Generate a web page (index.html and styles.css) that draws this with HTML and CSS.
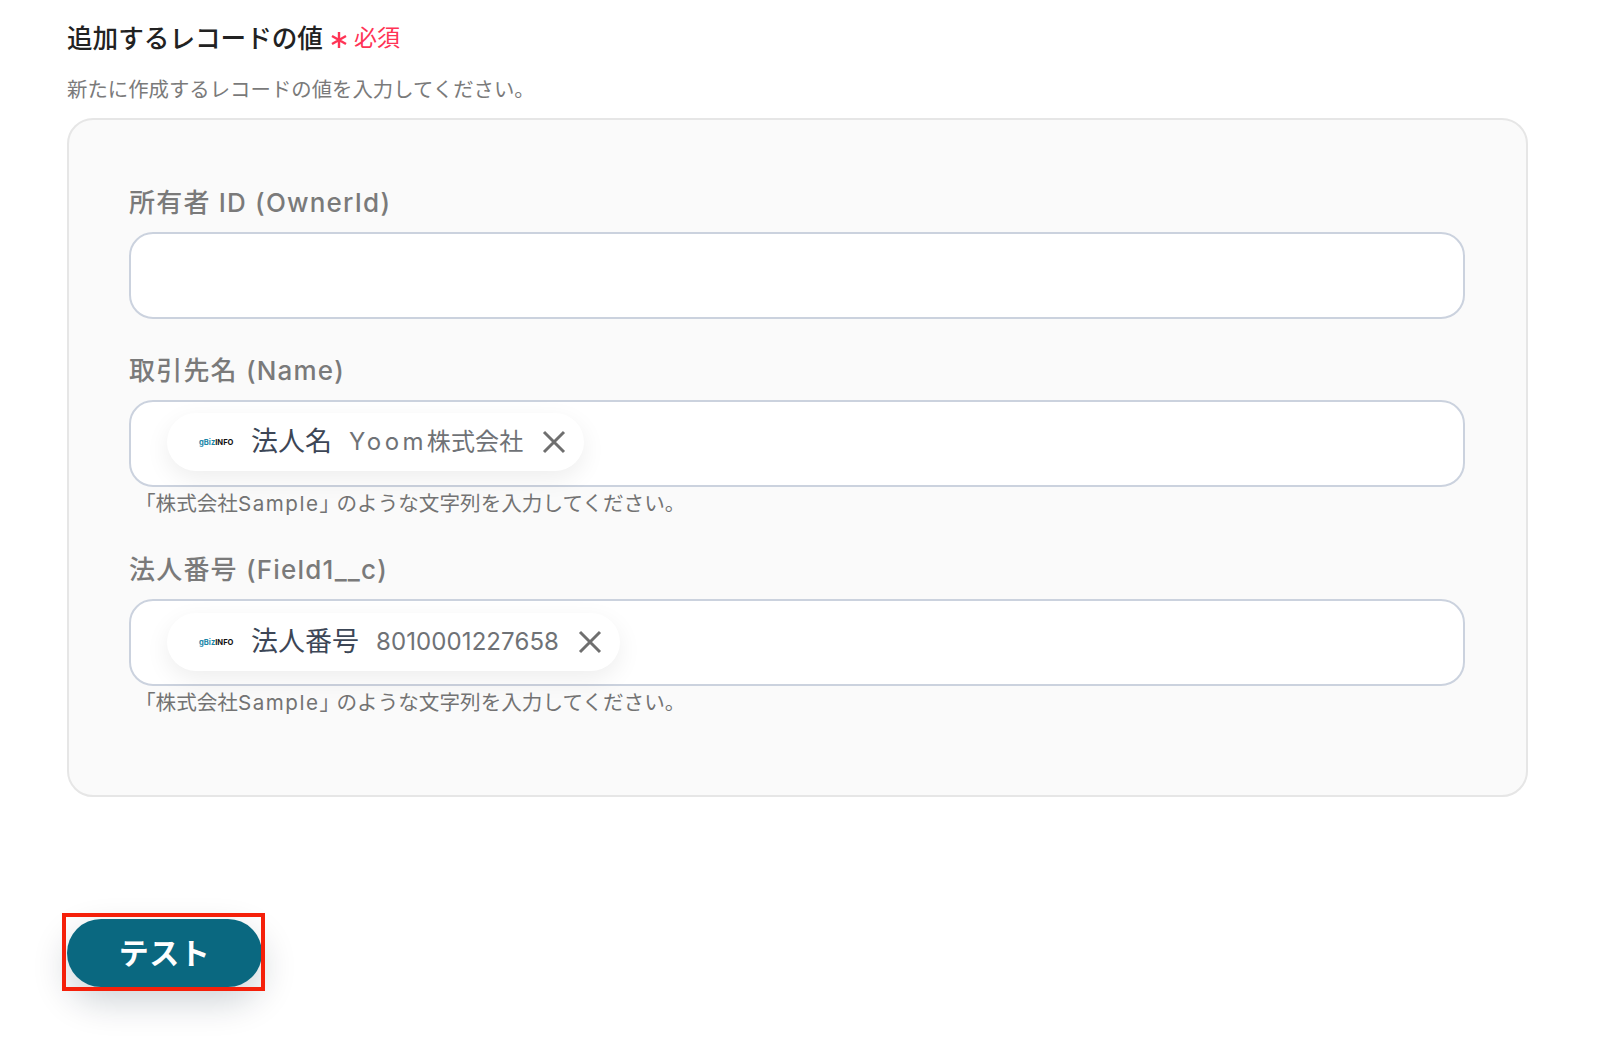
FILE: index.html
```html
<!DOCTYPE html>
<html lang="ja">
<head>
    <meta charset="UTF-8">
    <title>追加するレコードの値</title>
    <link rel="stylesheet" href="styles.css">
</head>
<body>
    <div class="page">
        <div class="heading">
            <h2>追加するレコードの値</h2>
            <svg class="asterisk" viewBox="0 0 16 16"><path d="M8 0V16M1 4L15 12M15 4L1 12"/></svg>
            <span class="required">必須</span>
        </div>
        <p class="lead">新たに作成するレコードの値を入力してください。</p>

        <div class="panel">
            <div class="field field-first">
                <label>所有者 ID (OwnerId)</label>
                <div class="input"></div>
            </div>

            <div class="field">
                <label>取引先名 (Name)</label>
                <div class="input">
                    <div class="chip">
                        <span class="logo"><span class="logo-biz">gBiz</span>INFO</span>
                        <span class="chip-name">法人名</span>
                        <span class="chip-value"><span class="tracked">Yoom</span>株式会社</span>
                        <svg class="chip-close" viewBox="0 0 24 24"><path d="M2 2L22 22M22 2L2 22"/></svg>
                    </div>
                </div>
                <p class="hint">「株式会社<span class="sample">Sample」</span>のような文字列を入力してください。</p>
            </div>

            <div class="field">
                <label>法人番号 (Field1__c)</label>
                <div class="input">
                    <div class="chip chip-number">
                        <span class="logo"><span class="logo-biz">gBiz</span>INFO</span>
                        <span class="chip-name">法人番号</span>
                        <span class="chip-value">8010001227658</span>
                        <svg class="chip-close" viewBox="0 0 24 24"><path d="M2 2L22 22M22 2L2 22"/></svg>
                    </div>
                </div>
                <p class="hint">「株式会社<span class="sample">Sample」</span>のような文字列を入力してください。</p>
            </div>
        </div>

        <div class="actions">
            <button type="button">テスト</button>
            <div class="highlight"></div>
        </div>
    </div>
</body>
</html>
```

FILE: styles.css
```css
* {
    box-sizing: border-box;
}
body {
    margin: 0;
    background: #fff;
    font-family: Inter, "Noto Sans CJK JP", sans-serif;
    color: #6f6f6f;
}
.page {
    width: 1600px;
    height: 1052px;
    padding: 17px 72px 0 67px;
    overflow: hidden;
}
.heading {
    display: flex;
    align-items: center;
    height: 38px;
}
h2 {
    margin: 0;
    font-size: 25.6px;
    font-weight: 500;
    color: #222;
}
.asterisk {
    width: 16px;
    height: 16px;
    margin: 8px 0 0 8px;
    fill: none;
    stroke: #ff3355;
    stroke-width: 2.4;
}
.required {
    margin-left: 7px;
    font-size: 23px;
    color: #ff3355;
}
.lead {
    margin: 21px 0 0;
    font-size: 20.4px;
    line-height: 28px;
    color: #7a7a7a;
}
.panel {
    margin-top: 14px;
    height: 679px;
    padding: 0 61px 0 60px;
    background: #fafafa;
    border: 2px solid #e6e6e6;
    border-radius: 26px;
}
.field {
    margin-top: 34px;
}
.field-first {
    margin-top: 65px;
}
label {
    display: block;
    font-size: 26px;
    font-weight: 500;
    line-height: 36px;
    letter-spacing: 1.2px;
    color: #7a7a7a;
}
.input {
    display: flex;
    align-items: center;
    height: 87px;
    margin-top: 11px;
    padding-left: 36px;
    background: #fff;
    border: 2px solid #cbd2de;
    border-radius: 24px;
}
.chip {
    display: flex;
    align-items: center;
    height: 58px;
    margin-top: -3px;
    padding: 0 18px 0 32px;
    background: #fff;
    border-radius: 29px;
    box-shadow: 0 8px 24px rgba(0, 0, 0, 0.07);
}
.chip-number {
    margin-top: -1px;
}
.logo {
    width: 36px;
    font-size: 7.6px;
    font-weight: 700;
    white-space: nowrap;
    color: #111;
}
.logo-biz {
    color: #1a86a8;
}
.chip-name {
    margin-left: 16px;
    font-size: 27px;
    line-height: 34px;
    color: #3c4656;
}
.chip-value {
    margin-left: 17px;
    font-size: 24px;
    line-height: 34px;
    letter-spacing: 0.1px;
    color: #6f7276;
}
.tracked {
    letter-spacing: 3.4px;
}
.chip-close {
    width: 24px;
    height: 24px;
    margin-left: 19px;
    fill: none;
    stroke: #6f6f6f;
    stroke-width: 3;
}
.hint {
    margin: 3px 0 0 6px;
    font-size: 20.6px;
    line-height: 28px;
    color: #737373;
}
.sample {
    margin-right: -5px;
    letter-spacing: 1.5px;
}
.actions {
    position: relative;
    width: 198px;
    margin-top: 122px;
}
button {
    display: block;
    width: 195px;
    height: 68px;
    padding: 0 0 4px;
    background: #0a6880;
    color: #fff;
    font-family: inherit;
    font-size: 30px;
    font-weight: 700;
    letter-spacing: 0.5px;
    border: none;
    border-radius: 34px;
    box-shadow: 0 14px 36px rgba(0, 30, 50, 0.2);
}
.highlight {
    position: absolute;
    top: -6px;
    left: -5px;
    width: 203px;
    height: 78px;
    border: 4px solid #f5200a;
}
```
